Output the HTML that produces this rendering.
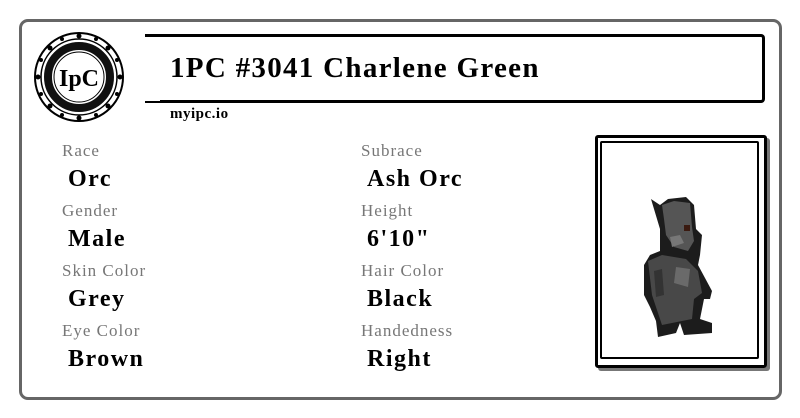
<!DOCTYPE html>
<html><head><meta charset="utf-8"><style>
html,body{margin:0;padding:0;background:#fff;width:800px;height:418px;overflow:hidden;position:relative;font-family:"Liberation Serif",serif}
.card{position:absolute;left:19px;top:19px;width:757px;height:375px;border:3px solid #666;border-radius:9px}
.tb{position:absolute;left:145px;top:34px;width:617px;height:63px;border:3px solid #000;border-left:none;border-radius:0 4px 4px 0}
.tb2{position:absolute;left:145px;top:97px;width:15px;height:4px;background:#fff}
.title{position:absolute;left:170px;top:52px;font-size:29px;font-weight:bold;letter-spacing:1.3px;color:#000}
.url{position:absolute;left:170px;top:106px;font-size:15px;font-weight:bold;letter-spacing:0.5px}
.l{position:absolute;font-size:17px;color:#777;letter-spacing:1px}
.v{position:absolute;font-size:24px;font-weight:bold;color:#000;letter-spacing:1.5px}
.f1{position:absolute;left:595px;top:135px;width:166px;height:227px;border:3px solid #000;border-radius:3px;box-shadow:3px 3px 0 #777}
.f2{position:absolute;left:600px;top:141px;width:155px;height:214px;border:2px solid #000;border-radius:2px}
</style></head><body>
<div class="card"></div>
<div class="tb"></div><div class="tb2"></div>
<svg style="position:absolute;left:32px;top:30px" width="94" height="94" viewBox="0 0 94 94">
<circle cx="47" cy="47" r="44" fill="#fff" stroke="#000" stroke-width="2"/>
<circle cx="47" cy="47" r="38" fill="none" stroke="#000" stroke-width="1.5"/>
<circle cx="47" cy="47" r="31" fill="none" stroke="#111" stroke-width="8"/>
<circle cx="47" cy="47" r="25" fill="#fff" stroke="#000" stroke-width="1"/>
<g fill="#000"><circle cx="47" cy="6" r="2.5"/><circle cx="47" cy="88" r="2.5"/><circle cx="6" cy="47" r="2.5"/><circle cx="88" cy="47" r="2.5"/><circle cx="18" cy="18" r="2.5"/><circle cx="76" cy="18" r="2.5"/><circle cx="18" cy="76" r="2.5"/><circle cx="76" cy="76" r="2.5"/><circle cx="30" cy="9" r="2"/><circle cx="64" cy="9" r="2"/><circle cx="30" cy="85" r="2"/><circle cx="64" cy="85" r="2"/><circle cx="9" cy="30" r="2"/><circle cx="9" cy="64" r="2"/><circle cx="85" cy="30" r="2"/><circle cx="85" cy="64" r="2"/></g>
<text x="47" y="56" text-anchor="middle" font-family="Liberation Serif" font-size="24" font-weight="bold" fill="#000">IpC</text>
</svg>
<div class="title">1PC #3041 Charlene Green</div>
<div class="url">myipc.io</div>
<div class="l" style="left:62px;top:141px">Race</div><div class="v" style="left:68px;top:166px">Orc</div>
<div class="l" style="left:62px;top:201px">Gender</div><div class="v" style="left:68px;top:226px">Male</div>
<div class="l" style="left:62px;top:261px">Skin Color</div><div class="v" style="left:68px;top:286px">Grey</div>
<div class="l" style="left:62px;top:321px">Eye Color</div><div class="v" style="left:68px;top:346px">Brown</div>
<div class="l" style="left:361px;top:141px">Subrace</div><div class="v" style="left:367px;top:166px">Ash Orc</div>
<div class="l" style="left:361px;top:201px">Height</div><div class="v" style="left:367px;top:226px">6'10"</div>
<div class="l" style="left:361px;top:261px">Hair Color</div><div class="v" style="left:367px;top:286px">Black</div>
<div class="l" style="left:361px;top:321px">Handedness</div><div class="v" style="left:367px;top:346px">Right</div>
<div class="f1"></div><div class="f2"></div>
<svg style="position:absolute;left:640px;top:195px" width="80" height="150" viewBox="0 0 80 150">
<path d="M11 4 L20 10 L28 4 L46 2 L54 10 L56 34 L62 40 L60 60 L58 70 L72 96 L70 104 L64 104 L60 124 L72 128 L72 138 L44 140 L40 128 L36 138 L18 142 L16 126 L10 112 L4 100 L4 70 L10 60 L20 56 L20 34 Z" fill="#1c1c1c"/>
<path d="M22 10 L34 6 L50 8 L52 32 L54 46 L48 56 L34 52 L26 40 L24 24 Z" fill="#555"/>
<path d="M8 66 L22 60 L46 64 L58 76 L62 98 L54 104 L52 124 L42 126 L22 130 L18 118 L12 100 Z" fill="#484848"/>
<path d="M30 42 L40 40 L44 48 L32 52 Z" fill="#777"/>
<path d="M36 72 L50 74 L48 92 L34 88 Z" fill="#6a6a6a"/>
<path d="M14 76 L22 74 L24 100 L16 102 Z" fill="#333"/>
<rect x="44" y="30" width="6" height="6" fill="#3a1a10"/>
</svg>
</body></html>
